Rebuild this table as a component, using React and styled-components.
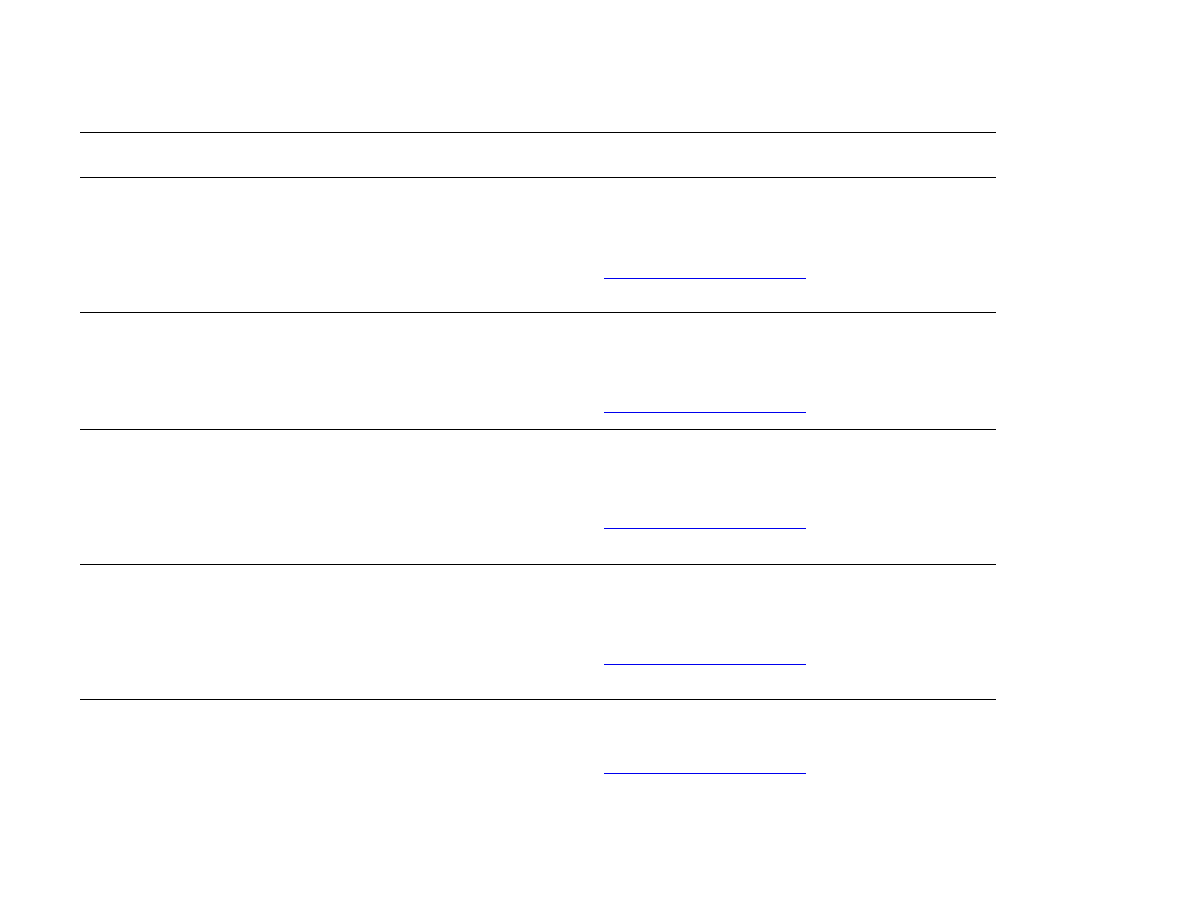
import React from 'react';
import styled, { createGlobalStyle } from 'styled-components';

const GlobalStyle = createGlobalStyle`
  body {
    margin: 0;
    background: #fff;
    font-family: "Liberation Sans", Arial, sans-serif;
  }
`;

const Page = styled.main`
  padding: 132px 0 0 80px;
`;

const Table = styled.div`
  width: 916px;
  display: flex;
  flex-direction: column;
`;

const Row = styled.div`
  display: grid;
  grid-template-columns: 524px 1fr;
  height: ${(p) => p.$height}px;
  box-sizing: border-box;
  border-top: 1px solid #000;
`;

const Cell = styled.div`
  padding-top: ${(p) => p.$offset || 0}px;
`;

const Link = styled.a`
  display: block;
  width: 202px;
  height: 1px;
  background: #0000ee;
`;

const rows = [
  { height: 135, offset: 100 },
  { height: 117, offset: 99 },
  { height: 135, offset: 98 },
  { height: 135, offset: 99 },
  { height: 117, offset: 73 },
];

const App = () => {
  return (
    <>
      <GlobalStyle />
      <Page>
        <Table>
          <Row $height={45}>
            <Cell />
            <Cell />
          </Row>
          {rows.map((r, i) => (
            <Row key={i} $height={r.height}>
              <Cell />
              <Cell $offset={r.offset}>
                <Link href="#" aria-label="link" />
              </Cell>
            </Row>
          ))}
        </Table>
      </Page>
    </>
  );
};

export default App;
